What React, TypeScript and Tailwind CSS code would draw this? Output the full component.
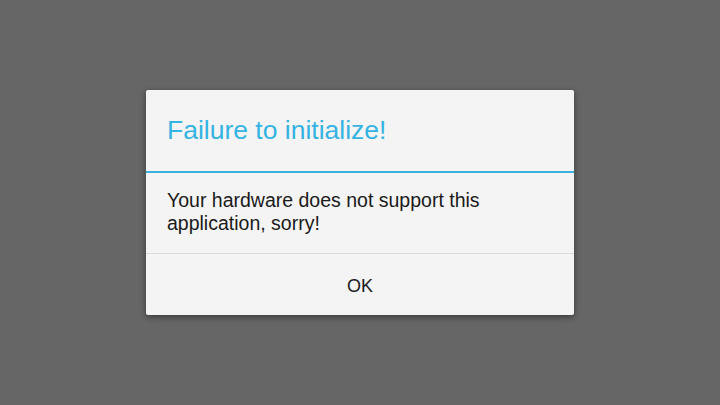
import React from "react";

export default function App() {
  return (
    <div
      className="flex h-[405px] w-[720px] items-center justify-center bg-[#666666]"
      style={{ fontFamily: '"Liberation Sans", Arial, sans-serif' }}
    >
      <div className="flex w-[428px] flex-col rounded-[2px] bg-[#f4f4f4] shadow-[0_2px_6px_rgba(0,0,0,0.45)]">
        <div className="flex h-[81px] items-center px-[21px]">
          <h1 className="text-[26.5px] leading-none text-[#35b3e2]">Failure to initialize!</h1>
        </div>
        <div className="h-[2px] bg-[#3bb2dc]" />
        <p className="h-[81px] border-b border-[#dcdcdc] px-[21px] pt-[16px] text-[19.5px] leading-[23px] text-[#1a1a1a]">
          Your hardware does not support this application, sorry!
        </p>
        <button
          type="button"
          className="flex h-[61px] items-center justify-center pt-[3px] text-[18px] text-[#1a1a1a]"
        >
          OK
        </button>
      </div>
    </div>
  );
}
